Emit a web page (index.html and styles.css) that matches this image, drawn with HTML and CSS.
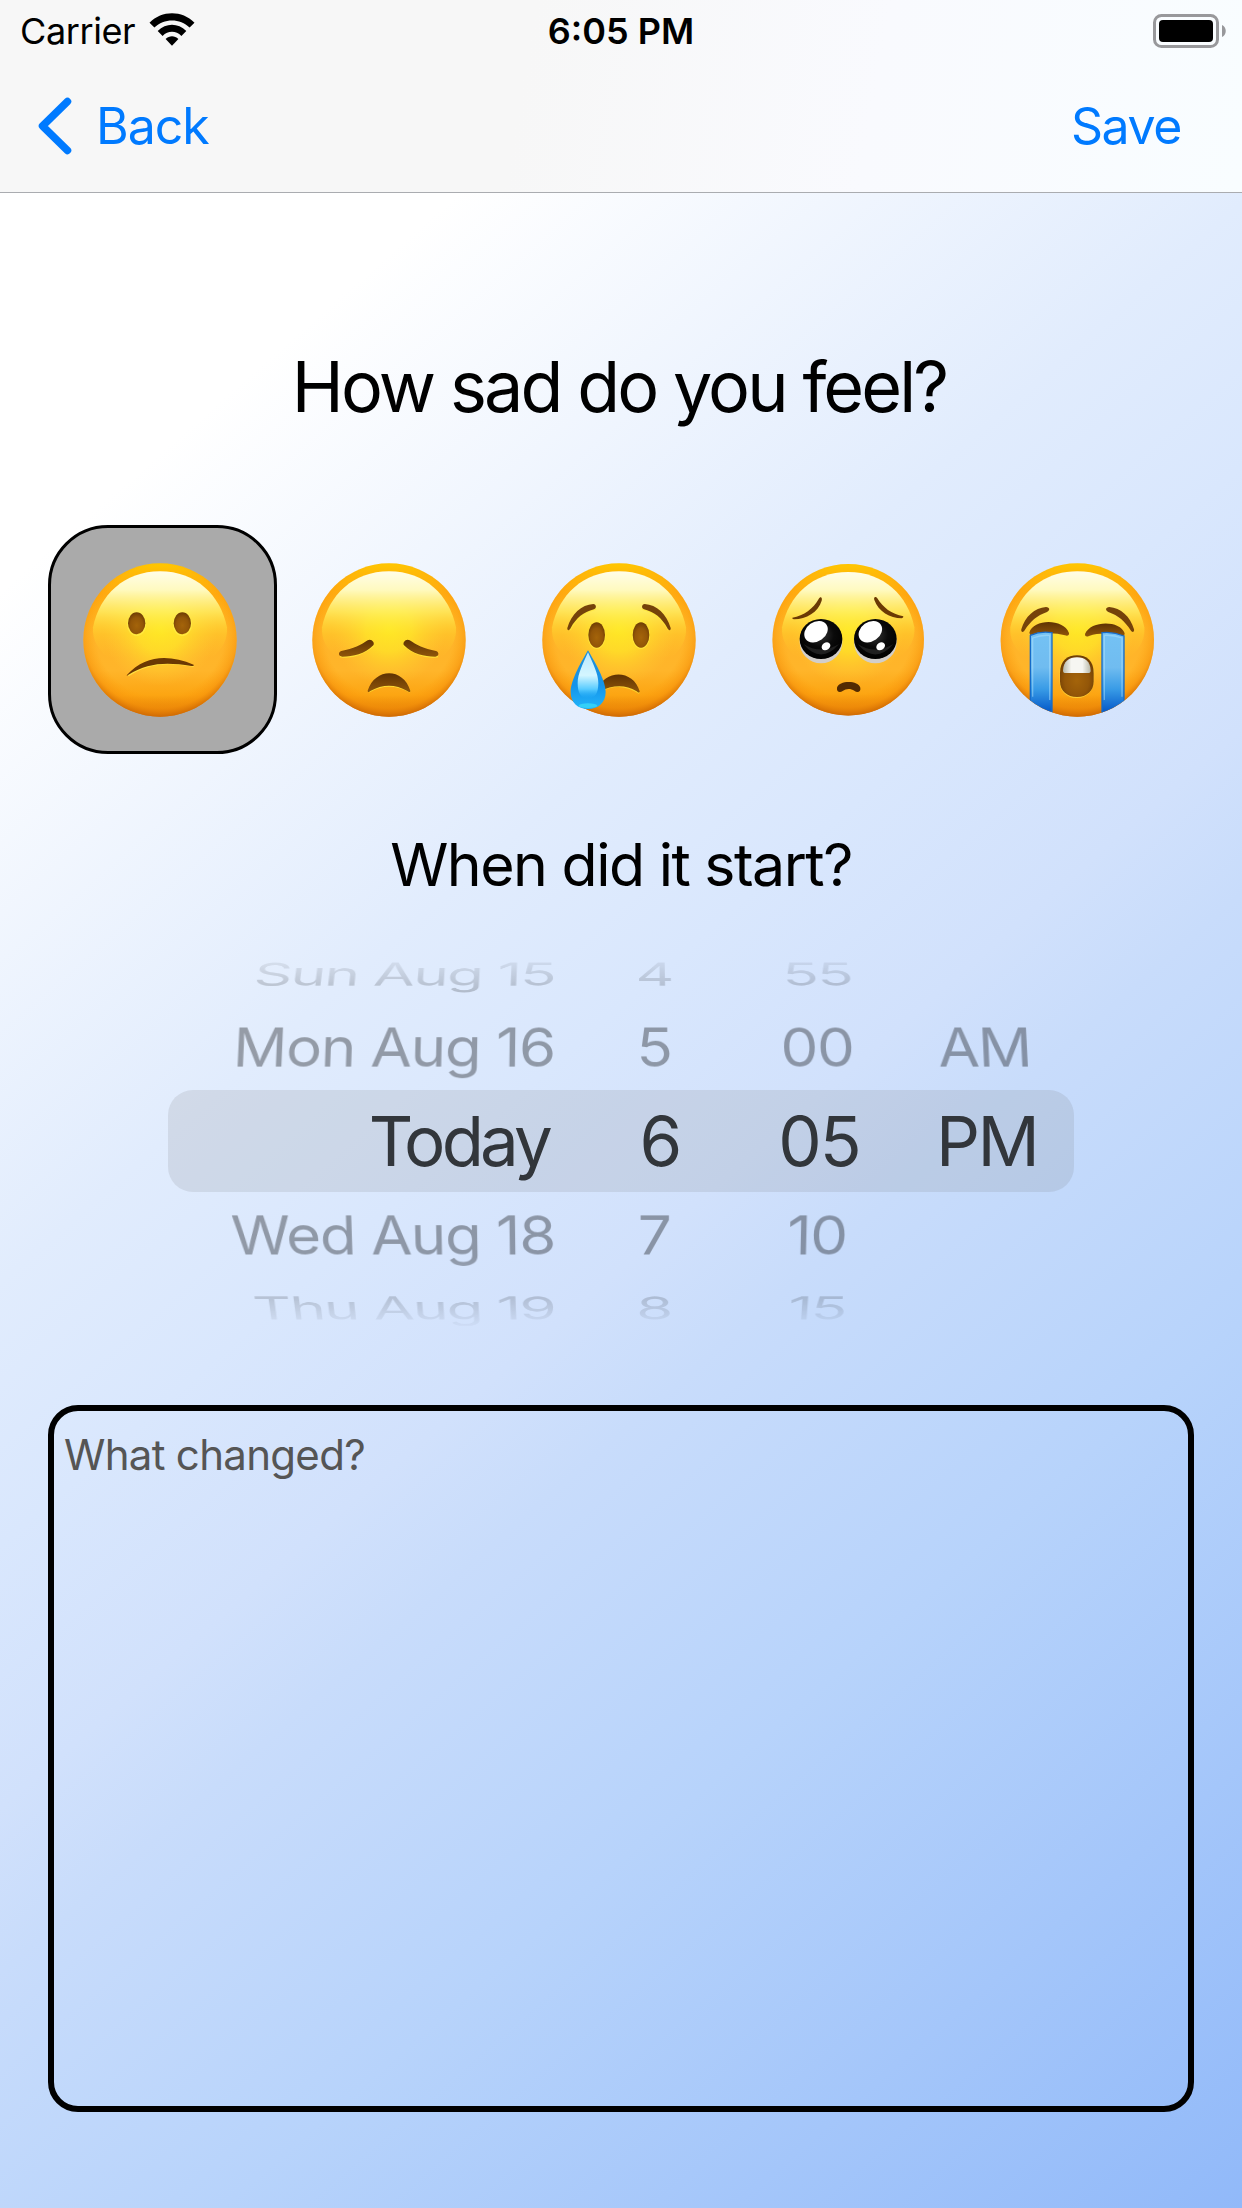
FILE: index.html
```html
<!DOCTYPE html>
<html lang="en">
<head>
<meta charset="utf-8">
<title>How sad do you feel?</title>
<link rel="stylesheet" href="styles.css">
</head>
<body>
<div class="screen">
  <header class="topbar">
    <div class="status">
      <div class="carrier">
        <span class="carrier-name">Carrier</span>
        <svg class="wifi" viewBox="0 0 46 34" width="46" height="34">
          <path d="M0.5 9.8 C13 -2.8 33 -2.8 45.500 9.8 L40.600 14.600 C31 5 15 5 5.400 14.600 Z"/>
          <path d="M8.700 18 C17 9.700 29 9.700 37.300 18 L32.400 22.900 C27 17.400 19 17.400 13.600 22.900 Z"/>
          <path d="M16.600 26 C20.400 22.200 25.600 22.200 29.400 26 L23 32.800 Z"/>
        </svg>
      </div>
      <span class="clock">6:05 PM</span>
      <svg class="battery" viewBox="0 0 74 34" width="74" height="34">
        <rect x="1.500" y="1.500" width="63" height="31" rx="7" fill="none" stroke="#98989b" stroke-width="3"/>
        <rect x="6" y="6" width="54" height="22" rx="4"/>
        <path d="M69 11 C74 13 74 21 69 23 Z" fill="#98989b"/>
      </svg>
    </div>
    <nav class="nav">
      <a class="back">
        <svg viewBox="0 0 34 60" width="34" height="60"><path d="M29.500 5.500 L4.500 30 L29.500 54.500" fill="none" stroke="#007aff" stroke-width="7.500" stroke-linecap="round" stroke-linejoin="round"/></svg>
        <span class="back-label">Back</span>
      </a>
      <a class="save">Save</a>
    </nav>
  </header>

  <h1 class="question"><span>How sad do you feel?</span></h1>

  <svg width="0" height="0" class="defs">
    <defs>
      <linearGradient id="base" x1="0" y1="0" x2="0" y2="1">
        <stop offset="0" stop-color="#ffc800"/><stop offset=".06" stop-color="#ffba08"/><stop offset=".2" stop-color="#ffaa10"/><stop offset=".45" stop-color="#ffb428"/><stop offset=".7" stop-color="#ffb52a"/><stop offset=".86" stop-color="#fca512"/><stop offset="1" stop-color="#d97404"/>
      </linearGradient>
      <radialGradient id="glow" cx=".5" cy=".42" r=".4">
        <stop offset="0" stop-color="#ffe722"/><stop offset=".4" stop-color="#ffe028" stop-opacity=".85"/><stop offset="1" stop-color="#ffc933" stop-opacity="0"/>
      </radialGradient>
      <radialGradient id="rim" cx=".5" cy=".44" r=".56">
        <stop offset=".76" stop-color="#ff9a08" stop-opacity="0"/><stop offset=".9" stop-color="#f58e08" stop-opacity=".5"/><stop offset="1" stop-color="#cf6a04"/>
      </radialGradient>
      <linearGradient id="shine" x1="0" y1="0" x2="0" y2="1">
        <stop offset="0" stop-color="#fffde8"/><stop offset=".18" stop-color="#fffac0"/><stop offset=".4" stop-color="#fff468" stop-opacity=".75"/><stop offset=".62" stop-color="#ffe92e" stop-opacity=".25"/><stop offset=".85" stop-color="#ffd22c" stop-opacity="0"/>
      </linearGradient>
      <radialGradient id="brown" cx=".5" cy=".6" r=".6">
        <stop offset="0" stop-color="#a4640a"/><stop offset=".6" stop-color="#935608"/><stop offset="1" stop-color="#6d3c04"/>
      </radialGradient>
      <linearGradient id="dark" x1="0" y1="0" x2="0" y2="1">
        <stop offset="0" stop-color="#5f3203"/><stop offset="1" stop-color="#90560a"/>
      </linearGradient>
      <linearGradient id="drop" x1="0" y1="0" x2="0" y2="1">
        <stop offset="0" stop-color="#1f8fd8"/><stop offset=".6" stop-color="#1594ea"/><stop offset="1" stop-color="#22b4fa"/>
      </linearGradient>
      <linearGradient id="dropin" x1="0" y1="0" x2="0" y2="1">
        <stop offset="0" stop-color="#b8e8ff"/><stop offset=".5" stop-color="#d4f6ff"/><stop offset=".8" stop-color="#58ccff"/><stop offset="1" stop-color="#26aef8" stop-opacity="0"/>
      </linearGradient>
      <linearGradient id="stream" x1="0" y1="0" x2="0" y2="1">
        <stop offset="0" stop-color="#74c2f4"/><stop offset=".4" stop-color="#70bcf0"/><stop offset=".65" stop-color="#389be6"/><stop offset=".88" stop-color="#0a60cc"/>
      </linearGradient>
      <linearGradient id="teeth" x1="0" y1="0" x2="1" y2="0">
        <stop offset="0" stop-color="#b8b8a8"/><stop offset=".3" stop-color="#f6f6f2"/><stop offset=".7" stop-color="#f6f6f2"/><stop offset="1" stop-color="#b8b8a8"/>
      </linearGradient>
      <radialGradient id="eyeball" cx=".5" cy=".4" r=".6">
        <stop offset="0" stop-color="#333"/><stop offset=".5" stop-color="#0a0a0a"/><stop offset="1" stop-color="#000"/>
      </radialGradient>
      <clipPath id="disc"><circle cx="297" cy="300" r="230"/></clipPath>
      <g id="face">
        <circle cx="297" cy="300" r="230" fill="url(#base)"/>
        <circle cx="297" cy="300" r="230" fill="url(#rim)"/>
        <circle cx="297" cy="300" r="215" fill="url(#glow)"/>
        <path d="M297 94 C405 94 478 165 498 262 C504 330 430 400 297 400 C164 400 90 330 96 262 C116 165 189 94 297 94 Z" fill="url(#shine)"/>
      </g>
    </defs>
  </svg>

  <div class="levels">
    <div class="level selected">
      <svg viewBox="64 60 600 600" width="200" height="200" role="img" aria-label="Slightly sad">
        <use href="#face" x="64" y="60"/>
        <g fill="none" stroke="#fff04a" stroke-width="4" opacity=".7">
          <ellipse cx="291" cy="313" rx="27" ry="33"/><ellipse cx="428" cy="313" rx="27" ry="33"/>
          <path d="M266 467 C330 424 395 426 462 439"/>
        </g>
        <ellipse cx="291" cy="310" rx="26" ry="33" fill="url(#brown)"/>
        <ellipse cx="428" cy="310" rx="26" ry="33" fill="url(#brown)"/>
        <path d="M261 466 C320 402 390 405 462 434 C463 438 460 439 455 438 C380 425 325 428 266 464 Q262 468 261 466 Z" fill="#6b3803"/>
      </svg>
    </div>
    <div class="level">
      <svg viewBox="0 0 600 600" width="200" height="200" role="img" aria-label="Disappointed">
        <use href="#face"/>
        <path d="M150 349 Q200 358 252 316 M444 349 Q394 358 341 316 M236 455 Q297 420 360 455" fill="none" stroke="#ffe838" stroke-width="6" opacity=".8"/>
        <path d="M154 333 C190 327 215 314 233 301 C243 294 256 307 250 316 C224 343 190 350 157 350 C144 349 144 336 154 333 Z" fill="url(#dark)"/>
        <path d="M438 333 C402 327 378 314 359 301 C349 294 336 307 342 316 C368 343 402 350 436 350 C448 349 448 336 438 333 Z" fill="url(#dark)"/>
        <path d="M233 452 C255 382 340 382 361 452 C361 458 356 457 352 453 C315 432 279 432 241 453 C237 457 233 457 233 452 Z" fill="url(#dark)"/>
      </svg>
    </div>
    <div class="level">
      <svg viewBox="0 0 600 600" width="200" height="200" role="img" aria-label="Crying">
        <use href="#face"/>
        <path d="M240 453 Q300 420 358 459 M149 270 Q176 218 228 206 M446 270 Q418 218 366 206" fill="none" stroke="#ffe838" stroke-width="6" opacity=".7"/>
        <path d="M142 264 C154 222 184 194 220 192 C229 193 231 204 222 208 C190 216 169 234 152 264 C148 273 141 272 142 264 Z" fill="#75420a"/>
        <path d="M452 264 C440 222 410 194 374 192 C365 193 363 204 372 208 C404 216 425 234 442 264 C446 273 453 272 452 264 Z" fill="#75420a"/>
        <g fill="none" stroke="#ffec40" stroke-width="4" opacity=".7"><ellipse cx="230" cy="288" rx="25" ry="37"/><ellipse cx="363" cy="288" rx="25" ry="37"/></g>
        <ellipse cx="230" cy="285" rx="25" ry="38" fill="url(#brown)"/>
        <ellipse cx="363" cy="285" rx="25" ry="38" fill="url(#brown)"/>
        <path d="M230 452 C255 386 340 388 359 454 C359 460 354 458 350 454 C315 432 278 435 238 454 Z" fill="url(#dark)"/>
        <path d="M204 331 C222 362 257 420 257 456 C257 488 235 507 204 507 C173 507 152 488 152 456 C152 420 186 362 204 331 Z" fill="url(#drop)"/>
        <path d="M204 337 C218 370 235 400 235 430 C235 460 225 475 204 475 C183 475 173 460 173 430 C173 400 190 370 204 337 Z" fill="url(#dropin)"/>
        <ellipse cx="204" cy="497" rx="28" ry="7" fill="#38d8f8" opacity=".8"/>
      </svg>
    </div>
    <div class="level">
      <svg viewBox="-3 0 600 600" width="200" height="200" role="img" aria-label="Pleading">
        <use href="#face" transform="translate(1.200 3) scale(.988)"/>
        <path d="M127 233 C162 227 190 206 206 177 C211 168 218 172 215 182 C205 216 168 238 133 238 Q126 238 127 233 Z" fill="#6b3a04"/>
        <path d="M460 229 C425 223 398 202 382 175 C377 167 370 171 373 180 C385 214 420 235 455 235 Q461 234 460 229 Z" fill="#6b3a04"/>
        <circle cx="213" cy="306" r="64" fill="#d2ceca"/><circle cx="376" cy="306" r="64" fill="#d2ceca"/>
        <ellipse cx="213" cy="297" rx="64" ry="60" fill="url(#eyeball)"/><ellipse cx="376" cy="297" rx="64" ry="60" fill="url(#eyeball)"/>
        <path d="M160 312 Q213 375 267 312 Q213 345 160 312 M323 312 Q376 375 430 312 Q376 345 323 312" fill="#3a3a3a" opacity=".5"/>
        <g fill="#fff">
          <ellipse cx="198" cy="275" rx="38" ry="29" transform="rotate(-35 198 275)"/><ellipse cx="361" cy="275" rx="38" ry="29" transform="rotate(-35 361 275)"/>
          <ellipse cx="228" cy="319" rx="14" ry="11" transform="rotate(-35 228 319)"/><ellipse cx="392" cy="319" rx="14" ry="11" transform="rotate(-35 392 319)"/>
        </g>
        <path d="M261 443 C266 420 326 420 331 443 C333 456 322 460 313 452 C302 445 288 445 278 453 C269 460 259 455 261 443 Z" fill="#532b02"/>
      </svg>
    </div>
    <div class="level">
      <svg viewBox="0 0 600 600" width="200" height="200" role="img" aria-label="Sobbing">
        <use href="#face" x="-5"/>
        <path d="M124 268 C135 230 164 203 198 201 C210 202 211 211 201 216 C171 226 151 244 134 271 C129 279 122 276 124 268 Z" fill="#75420a"/>
        <path d="M462 268 C451 230 422 203 388 201 C376 202 375 211 385 216 C415 226 435 244 452 271 C457 279 464 276 462 268 Z" fill="#75420a"/>
        <path d="M148 278 C160 236 250 235 267 279 C268 287 262 289 255 286 C222 276 188 278 152 288 Z" fill="url(#dark)"/>
        <path d="M434 280 C420 240 332 241 315 282 C315 290 320 291 327 288 C360 277 398 279 432 290 Z" fill="url(#dark)"/>
        <g clip-path="url(#disc)" transform="translate(-5 0)" stroke="#176bc8" stroke-width="4">
          <path d="M156 286 Q188 272 221 278 L221 540 L156 540 Z" fill="url(#stream)"/>
          <path d="M371 278 Q404 274 437 288 L437 540 L371 540 Z" fill="url(#stream)"/>
        </g>
        <path d="M158 470 L158 294 Q184 284 209 286 L209 480 M373 480 L373 286 Q400 284 426 294 L426 470" fill="none" stroke="#b8e6ff" stroke-width="4" opacity=".45"/>
        <rect x="239" y="345" width="102" height="129" rx="48" fill="#ffe040" opacity=".7"/>
        <path d="M240 400 C240 362 262 346 291 346 C320 346 341 362 341 400 L341 424 C341 454 320 471 291 471 C262 471 240 454 240 424 Z" fill="url(#brown)"/>
        <path d="M249 392 C250 364 267 352 291 352 C315 352 331 364 332 392 Q332 399 324 399 L257 399 Q249 399 249 392 Z" fill="url(#teeth)"/>
      </svg>
    </div>
  </div>

  <h2 class="question-when"><span>When did it start?</span></h2>

  <div class="wheel">
    <span class="far above date">Sun Aug 15</span><span class="far above hour">4</span><span class="far above minute">55</span><span class="far above period"></span>
    <span class="near above date">Mon Aug 16</span><span class="near above hour">5</span><span class="near above minute">00</span><span class="near above period">AM</span>
    <span class="now date">Today</span><span class="now hour">6</span><span class="now minute">05</span><span class="now period">PM</span>
    <span class="near below date">Wed Aug 18</span><span class="near below hour">7</span><span class="near below minute">10</span><span class="near below period"></span>
    <span class="far below date">Thu Aug 19</span><span class="far below hour">8</span><span class="far below minute">15</span><span class="far below period"></span>
  </div>

  <div class="note"><span class="placeholder">What changed?</span></div>
</div>
</body>
</html>
```
FILE: styles.css
```css
* { box-sizing: border-box; }

body {
  margin: 0;
  font-family: Inter, "Liberation Sans", sans-serif;
  color: #000;
}

.screen {
  display: flex;
  flex-direction: column;
  width: 1242px;
  height: 2208px;
  overflow: hidden;
  background: linear-gradient(139deg, #fff 0%, #fff 18%, #e1ecfd 39%, #d9e7fd 47%, #d1e1fc 55%, #c8dcfb 60%, #b7d3fb 73%, #91b9f9 100%);
}

.topbar {
  height: 193px;
  flex: none;
  border-bottom: 1px solid #aaacb0;
  background: linear-gradient(100deg, #f7f7f7 0%, #f7f7f7 42%, #f9fafe 70%, #f9fdff 100%);
}

.status {
  display: grid;
  grid-template-columns: 1fr auto 1fr;
  align-items: center;
  height: 60px;
  padding: 0 15px;
}

.carrier { display: flex; align-items: center; gap: 14px; padding-left: 5px; }
.carrier-name { font-size: 36px; line-height: 62px; letter-spacing: -.4px; }
.wifi { margin-top: -2px; }
.clock { font-size: 36px; line-height: 62px; font-weight: 600; }
.battery { justify-self: end; }

.nav {
  display: flex;
  justify-content: space-between;
  align-items: center;
  height: 132px;
  padding: 0 61px 0 38px;
  font-size: 50px;
  color: #007aff;
}
.back { display: flex; align-items: center; gap: 24px; }
.back-label { letter-spacing: -1px; }
.save { letter-spacing: -1.4px; }

.question, .question-when {
  margin: 0;
  flex: none;
  text-align: center;
  font-weight: 400;
}
.question { height: 332px; padding: 144px 4px 0 0; font-size: 70px; line-height: 100px; letter-spacing: -2.9px; }
.question-when { height: 190px; padding-top: 71px; font-size: 59px; line-height: 80px; letter-spacing: -1.5px; }

.defs { position: absolute; }

.levels {
  display: grid;
  grid-template-columns: repeat(5, 229.250px);
  margin-left: 48px;
  height: 229px;
  flex: none;
}
.level { display: flex; align-items: center; justify-content: center; height: 229px; padding-right: 3px; }
.level:last-child { padding-right: 0; }
.selected { border: 3px solid #000; border-radius: 60px; background: #aaa; }

.wheel {
  display: grid;
  flex: none;
  width: 906px;
  height: 394px;
  margin-left: 168px;
  grid-template-columns: 388px 196px 130px 192px;
  grid-template-rows: 60px 86px 102px 86px 60px;
  perspective: 4000px;
  -webkit-mask-image: linear-gradient(transparent 4px, #000 80px, #000 314px, transparent 387px);
  mask-image: linear-gradient(transparent 4px, #000 80px, #000 314px, transparent 387px);
}
.wheel span { white-space: nowrap; display: flex; align-items: center; }
.wheel .date { justify-content: flex-end; padding-right: 1px; }
.wheel .hour, .wheel .minute { justify-content: center; }
.wheel .period { padding-left: 56px; }

.wheel .now { font-size: 69px; letter-spacing: -2px; color: #32363b; background: rgba(105, 105, 105, .14); }
.wheel .now.date { border-radius: 25px 0 0 25px; padding-right: 7px; letter-spacing: -3.8px; }
.wheel .now.hour { padding-left: 12px; }
.wheel .now.minute { padding-left: 4px; }
.wheel .now.period { border-radius: 0 25px 25px 0; padding-left: 54px; letter-spacing: -2.5px; }
.near, .far { font-size: 60px; letter-spacing: -1.3px; color: rgba(0, 0, 0, .34); }
.far { letter-spacing: -1.7px; }
.near.above { transform: rotateX(26deg); }
.near.below { transform: rotateX(-26deg); }
.far.above { transform: rotateX(56deg); }
.far.below { transform: rotateX(-56deg); }

.note {
  flex: none;
  width: 1146px;
  height: 707px;
  margin: 67px 0 0 48px;
  padding: 18px 10px;
  border: 6px solid #000;
  border-radius: 30px;
}
.placeholder { font-size: 42px; line-height: 52px; letter-spacing: -.7px; color: #555; }
```
